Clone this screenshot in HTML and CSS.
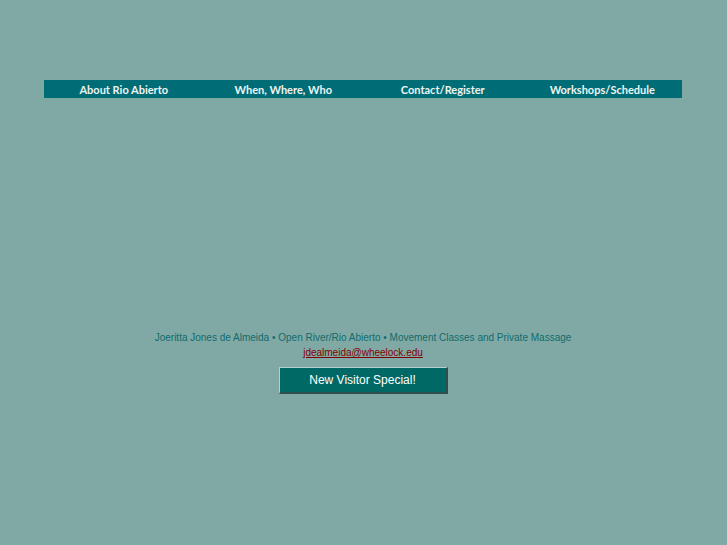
FILE: index.html
```html
<!DOCTYPE html>
<html>
<head>
<meta charset="utf-8">
<title>Rio Abierto</title>
<link rel="stylesheet" href="styles.css">
</head>
<body>
<div class="page">
  <nav class="nav">
    <a class="nav-item" href="#">About Rio Abierto</a>
    <a class="nav-item" href="#">When, Where, Who</a>
    <a class="nav-item" href="#">Contact/Register</a>
    <a class="nav-item" href="#">Workshops/Schedule</a>
  </nav>
  <div class="content"></div>
  <footer class="footer">
    <p class="credit">Joeritta Jones de Almeida &bull; Open River/Rio Abierto &bull; Movement Classes and Private Massage</p>
    <p class="mail"><a href="#">jdealmeida@wheelock.edu</a></p>
    <button class="special" type="button">New Visitor Special!</button>
  </footer>
</div>
</body>
</html>
```
FILE: styles.css
```css
html, body {
  margin: 0;
  padding: 0;
  background: #80a9a6;
}
.page {
  width: 638px;
  margin: 0 0 0 44px;
  padding-top: 80px;
}
.nav {
  display: flex;
  height: 18px;
  background: #006d76;
}
.nav-item {
  flex: 1;
  display: flex;
  align-items: center;
  justify-content: center;
  font-family: Lato, "Open Sans", sans-serif;
  font-weight: 700;
  font-size: 11px;
  color: #eef4f3;
  text-decoration: none;
}
.content {
  height: 233px;
}
.footer {
  display: flex;
  flex-direction: column;
  align-items: center;
  font-family: "Liberation Sans", Arial, sans-serif;
}
.credit {
  margin: 0;
  font-size: 10px;
  line-height: 14px;
  color: #106c6c;
  white-space: nowrap;
}
.mail {
  margin: 1px 0 0;
  font-size: 10px;
  line-height: 14px;
}
.mail a {
  color: #800000;
}
.special {
  margin-top: 7px;
  width: 169px;
  height: 27px;
  background: #006965;
  color: #ffffff;
  font-family: "Liberation Sans", Arial, sans-serif;
  font-size: 12px;
  border-style: solid;
  border-width: 1px 2px 2px 1px;
  border-color: #b4d0cd #2f4f4c #2f4f4c #b4d0cd;
  padding: 0;
}
```
